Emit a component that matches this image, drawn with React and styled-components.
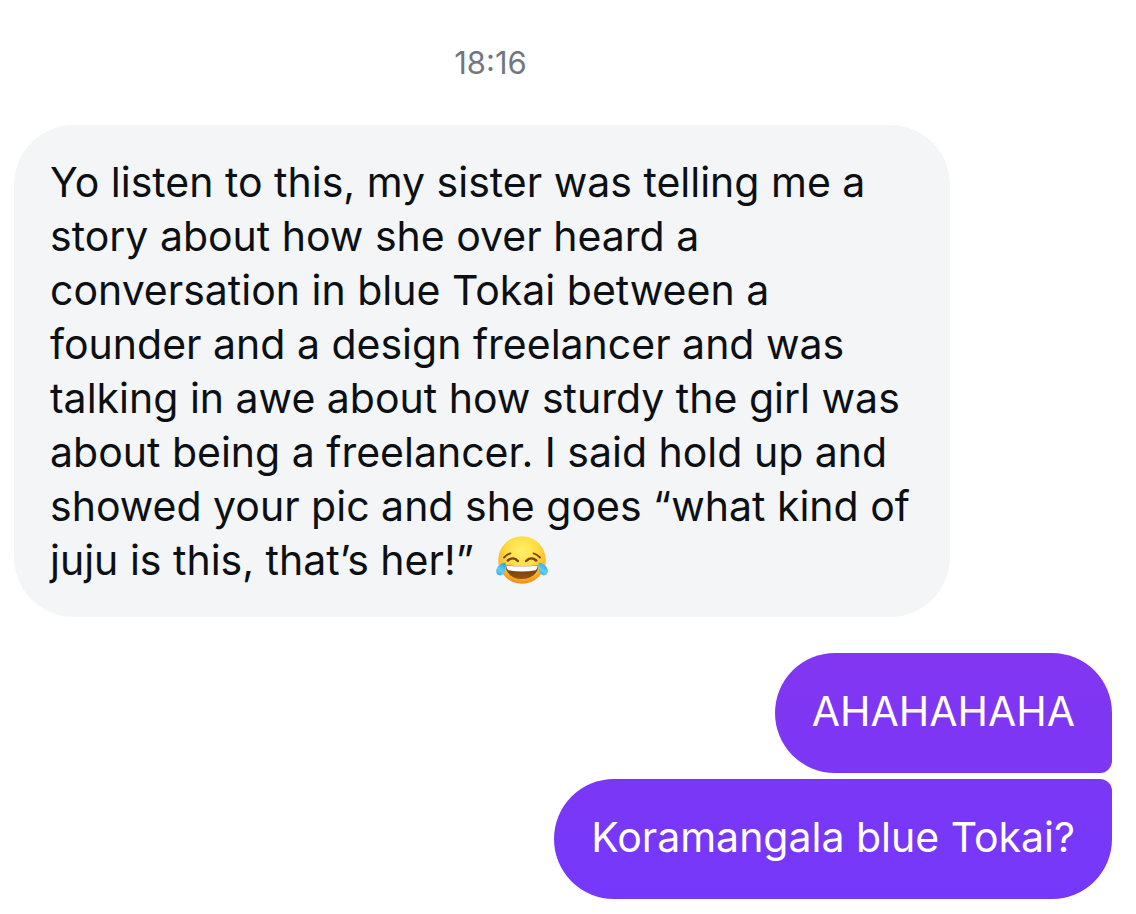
import React from 'react'
import styled, { createGlobalStyle } from 'styled-components'

const GlobalStyle = createGlobalStyle`
    body {
        margin: 0;
        background: #ffffff;
        font-family: Inter, "Liberation Sans", sans-serif;
    }
`
const Chat = styled.main`
    display: flex;
    flex-direction: column;
    padding: 45px 24px 15px 14px;
`
const Time = styled.time`
    align-self: center;
    margin-right: 145px;
    margin-bottom: 44px;
    font-size: 31px;
    line-height: 36px;
    color: #737780;
`
const Bubble = styled.p`
    box-sizing: border-box;
    margin: 0;
    font-size: 41px;
    line-height: 54px;
`
const Received = styled(Bubble)`
    align-self: flex-start;
    max-width: 936px;
    padding: 30px 36px;
    border-radius: 60px;
    background: #f3f5f7;
    color: #0c1014;
`
const SentGroup = styled.div`
    display: flex;
    flex-direction: column;
    align-items: flex-end;
    gap: 6px;
    margin-top: 36px;
`
const Sent = styled(Bubble)`
    padding: 31px 37px 35px;
    border-radius: ${props => props.$last ? "60px 12px 60px 60px" : "60px 60px 12px 60px"};
    background: ${props => props.$last
        ? "linear-gradient(#7b37f6, #7538fa)"
        : "linear-gradient(#8236f1, #7c37f5)"};
    color: white;
`
const Emoji = styled.svg`
    width: 52px;
    height: 48px;
    margin: 0 11px;
    vertical-align: -9px;
`

function JoyFace() {
    return (
        <Emoji viewBox="0 0 52 48" role="img" aria-label="😂">
            <defs>
                <radialGradient id="face" cx="50%" cy="32%" r="68%">
                    <stop offset="0" stopColor="#fff16a" />
                    <stop offset="0.5" stopColor="#ffdc42" />
                    <stop offset="0.8" stopColor="#fbb62b" />
                    <stop offset="1" stopColor="#ee8b1b" />
                </radialGradient>
                <linearGradient id="mouth" x1="0" y1="0" x2="0" y2="1">
                    <stop offset="0" stopColor="#653309" />
                    <stop offset="1" stopColor="#96570d" />
                </linearGradient>
                <linearGradient id="tear" x1="0.7" y1="0" x2="0.2" y2="1">
                    <stop offset="0" stopColor="#25a6e8" />
                    <stop offset="0.6" stopColor="#63cdf6" />
                    <stop offset="1" stopColor="#2caae8" />
                </linearGradient>
            </defs>
            <circle cx="26" cy="24" r="23.8" fill="url(#face)" />
            <g fill="none" stroke="#7a410d" strokeLinecap="round">
                <path d="M8 21.5C10 19.5 12 18 14.5 17.4M44 21.5C42 19.5 40 18 37.5 17.4" strokeWidth="1.8" />
                <path d="M11.8 24.5C15.2 21.4 19 22 21.8 25M40.2 24.5C36.8 21.4 33 22 30.2 25" strokeWidth="2.5" />
            </g>
            <path d="M9.5 29.2Q26 31 42.5 29.2C42 37.5 35.5 43 26 43S10 37.5 9.5 29.2Z" fill="url(#mouth)" />
            <path d="M10.2 29.5Q26 31.2 41.8 29.5Q41.8 33 39.8 34.2Q26 37 12.2 34.2Q10.2 33 10.2 29.5Z" fill="#ffffff" />
            <path d="M9.3 26.6C5.5 27 .3 30.4 .2 35.1C.2 38 2 39.6 4.4 39.4C8.8 39 10.2 32 9.3 26.6Z" fill="url(#tear)" />
            <path d="M42.7 26.6C46.5 27 51.7 30.4 51.8 35.1C51.8 38 50 39.6 47.6 39.4C43.2 39 41.8 32 42.7 26.6Z" fill="url(#tear)" />
        </Emoji>
    )
}

export default function App() {
    return (
        <Chat>
            <GlobalStyle />
            <Time>18:16</Time>
            <Received>
                Yo listen to this, my sister was telling me a story about how she over heard a conversation in blue Tokai between a founder and a design freelancer and was talking in awe about how sturdy the girl was about being a freelancer. I said hold up and showed your pic and she goes “what kind of juju is this, that’s her!” <JoyFace />
            </Received>
            <SentGroup>
                <Sent>AHAHAHAHA</Sent>
                <Sent $last>Koramangala blue Tokai?</Sent>
            </SentGroup>
        </Chat>
    )
}
